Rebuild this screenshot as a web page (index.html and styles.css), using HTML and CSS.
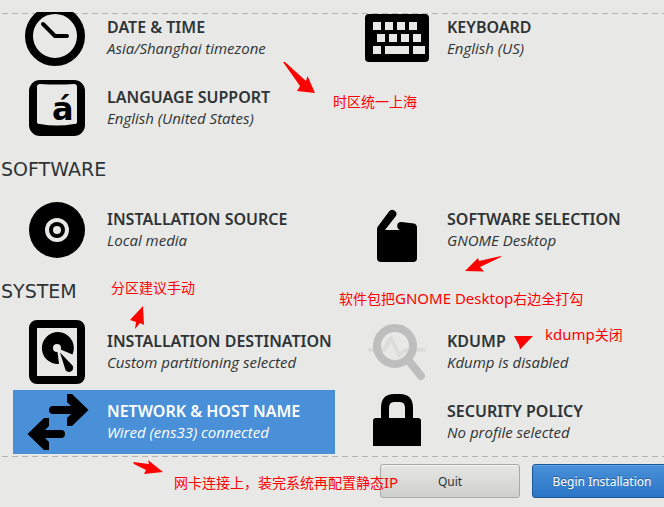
FILE: index.html
```html
<!DOCTYPE html>
<html lang="en">
<head>
<meta charset="utf-8">
<title>Installation Summary</title>
<link rel="stylesheet" href="styles.css">
</head>
<body>
<main class="summary">
  <div class="hub">
    <div class="grid">
      <a class="spoke" href="#">
        <svg class="icon" viewBox="0 0 64 64" aria-hidden="true">
          <circle cx="30" cy="30" r="26" fill="none" stroke="#000" stroke-width="8"/>
          <path d="M18 18L30 30H42" fill="none" stroke="#000" stroke-width="4" stroke-linecap="round" stroke-linejoin="round"/>
        </svg>
        <span class="label"><span class="name">DATE &amp; TIME</span><span class="status">Asia/Shanghai timezone</span></span>
      </a>
      <a class="spoke" href="#">
        <svg class="icon" viewBox="0 0 64 64" aria-hidden="true">
          <rect y="8" width="64" height="48" rx="4"/>
          <path class="cut" d="M8 16h8v8H8zM20 16h8v8h-8zM32 16h8v8h-8zM44 16h8v8h-8zM12 28h8v8h-8zM24 28h8v8h-8zM36 28h8v8h-8zM48 28h8v8h-8zM8 40h8v8H8zM20 40h24v8H20zM48 40h12v8H48z"/>
        </svg>
        <span class="label"><span class="name">KEYBOARD</span><span class="status">English (US)</span></span>
      </a>
      <a class="spoke" href="#">
        <svg class="icon" viewBox="0 0 64 64" aria-hidden="true">
          <rect x="4" y="4" width="56" height="56" rx="11"/>
          <path class="cut" d="M15 8Q32 9 49 8Q52 8 52 11V46Q52 48 49 48Q32 51 15 48Q12 48 12 46V11Q12 8 15 8Z"/>
          <text class="glyph" x="27" y="44">á</text>
        </svg>
        <span class="label"><span class="name">LANGUAGE SUPPORT</span><span class="status">English (United States)</span></span>
      </a>
    </div>

    <h2 class="section">SOFTWARE</h2>
    <div class="grid">
      <a class="spoke" href="#">
        <svg class="icon" viewBox="0 0 64 64" aria-hidden="true">
          <circle cx="32" cy="32" r="28"/>
          <circle class="cut" cx="32" cy="32" r="12"/>
          <circle cx="32" cy="32" r="8"/>
          <circle class="cut" cx="32" cy="32" r="4"/>
        </svg>
        <span class="label"><span class="name">INSTALLATION SOURCE</span><span class="status">Local media</span></span>
      </a>
      <a class="spoke" href="#">
        <svg class="icon" viewBox="0 0 64 64" aria-hidden="true">
          <path d="M12 32H52V60a4 4 0 0 1-4 4H16a4 4 0 0 1-4-4Z"/>
          <path d="M12 34V31Q12 29 14 27L24 13.500A4 4 0 0 1 30.500 18.500L20 32V34Z"/>
          <path d="M36 32a4 4 0 0 1 .5-8L49 25.500Q52 26 52 30V34H40V32Z"/>
        </svg>
        <span class="label"><span class="name">SOFTWARE SELECTION</span><span class="status">GNOME Desktop</span></span>
      </a>
    </div>

    <h2 class="section">SYSTEM</h2>
    <div class="grid">
      <a class="spoke" href="#">
        <svg class="icon" viewBox="0 0 64 64" aria-hidden="true">
          <rect x="8" y="4" width="48" height="56" rx="4" fill="none" stroke="#000" stroke-width="8"/>
          <path class="cut" d="M12 8H52V56H12Z"/>
          <path d="M32 28L47.500 34.500A16 16 0 1 0 34 44Z"/>
          <circle class="cut" cx="32" cy="28" r="4"/>
          <path d="M35 32.500L47.500 45.500A4 4 0 0 1 40.500 50Z"/>
        </svg>
        <span class="label"><span class="name">INSTALLATION DESTINATION</span><span class="status">Custom partitioning selected</span></span>
      </a>
      <a class="spoke" href="#">
        <svg class="icon" viewBox="0 0 64 64" fill="none" stroke-linecap="round" stroke-linejoin="round" aria-hidden="true">
          <path d="M5 30H19L26 18L34 35L41 30H59" stroke="#dcdcdb" stroke-width="4"/>
          <circle cx="30" cy="26" r="18" stroke="#bebebe" stroke-width="8"/>
          <path d="M44 41L56 56" stroke="#bebebe" stroke-width="8"/>
        </svg>
        <span class="label"><span class="name">KDUMP</span><span class="status">Kdump is disabled</span></span>
      </a>
      <a class="spoke selected" href="#">
        <svg class="icon" viewBox="0 0 64 64" aria-hidden="true">
          <path d="M42 4H47L63.500 20L47 36H42V28L46 24H28a4 4 0 0 1 0-8H46L42 12Z"/>
          <path d="M24 28H19L2.500 44L19 60H24V52L20 48H36a4 4 0 0 0 0-8H20L24 36Z"/>
        </svg>
        <span class="label"><span class="name">NETWORK &amp; HOST NAME</span><span class="status">Wired (ens33) connected</span></span>
      </a>
      <a class="spoke" href="#">
        <svg class="icon" viewBox="0 0 64 64" aria-hidden="true">
          <path d="M20 32V18Q20 8 29 8H35Q44 8 44 18V32" fill="none" stroke="#000" stroke-width="8"/>
          <path d="M8 56V31a3 3 0 0 1 3-3H53a3 3 0 0 1 3 3V56Z"/>
        </svg>
        <span class="label"><span class="name">SECURITY POLICY</span><span class="status">No profile selected</span></span>
      </a>
    </div>
  </div>
  <footer class="actions">
    <button class="button" type="button">Quit</button>
    <button class="button primary" type="button">Begin Installation</button>
  </footer>
</main>

<svg class="arrows" viewBox="0 0 664 507" aria-hidden="true">
  <path d="M283 62H285L306 81L307.500 76L315 93L297 91L300 86Z"/>
  <path d="M501 256V257L480 267L484 271.500L465 271L478 258L479 261Z"/>
  <path d="M143 306L144 325L140 323L135 329L136 322L130 320Z"/>
  <path d="M133 462L149 464L148 460L163 472L144 474L146 470L134 464Z"/>
  <path d="M514 336H533L520 349.500L519 345Z"/>
</svg>
<p class="note note-timezone">时区统一上海</p>
<p class="note note-partition">分区建议手动</p>
<p class="note note-packages">软件包把<span class="latin">GNOME Desktop</span>右边全打勾</p>
<p class="note note-kdump"><span class="latin">kdump</span>关闭</p>
<p class="note note-network">网卡连接上，装完系统再配置静态<span class="latin">IP</span></p>
</body>
</html>
```

FILE: styles.css
```css
* {
  box-sizing: border-box;
}

body {
  position: relative;
  margin: 0;
  overflow: hidden;
  background: #e8e8e6;
  color: #2e3436;
  font-family: "Noto Sans", "Open Sans", sans-serif;
}

.summary {
  padding-top: 12px;
}

/* Scrolled area, with a dashed edge where content continues */
.hub {
  position: relative;
  overflow: hidden;
  padding-bottom: 3px;
}

.hub::before,
.hub::after {
  content: "";
  position: absolute;
  left: 0;
  right: 0;
  height: 1px;
  background: repeating-linear-gradient(90deg, transparent 0 2px, #b4b4b2 2px 8px, transparent 8px 10px);
}

.hub::before {
  top: 1px;
}

.hub::after {
  bottom: 0;
}

.grid {
  display: grid;
  grid-template-columns: 1fr 1fr;
  gap: 6px 18px;
  margin-left: 13px;
  margin-right: -11px;
}

.grid:first-child {
  margin-top: -6px;
}

.spoke {
  position: relative;
  display: flex;
  gap: 18px;
  height: 64px;
  padding-left: 12px;
  color: inherit;
  text-decoration: none;
}

.icon {
  flex: none;
  width: 64px;
  height: 64px;
}

.cut {
  fill: #e8e8e6;
}

.glyph {
  font: bold 32px "DejaVu Sans", sans-serif;
}

.label {
  display: flex;
  flex-direction: column;
  padding-top: 11px;
  white-space: nowrap;
}

.name {
  font-size: 16px;
  line-height: 21px;
  font-weight: 600;
}

.status {
  font-family: "Open Sans", "Noto Sans", sans-serif;
  font-size: 15px;
  line-height: 21px;
  font-style: italic;
}

.selected {
  background: #4a90d9;
  color: #fff;
}

.section {
  margin: 0;
  padding: 14px 1px;
  font-family: "DejaVu Sans", sans-serif;
  font-size: 19px;
  line-height: 30px;
  font-weight: 400;
}

.actions {
  display: flex;
  justify-content: flex-end;
  gap: 12px;
  margin-right: -8px;
  padding-top: 7px;
}

.button {
  width: 140px;
  height: 34px;
  padding: 0;
  border: 1px solid #a8a8a6;
  border-radius: 3px;
  background: linear-gradient(#e6e6e5, #cfcfcd);
  box-shadow: inset 0 1px #f6f6f5;
  color: #2e3436;
  font: 12px "Noto Sans", "Open Sans", sans-serif;
}

.primary {
  border-color: #1c5795;
  background: linear-gradient(#4a90d9, #2a76c6);
  box-shadow: inset 0 1px #66a4e2;
  color: #fff;
  text-shadow: 0 -1px rgba(0, 0, 0, 0.35);
}

/* Annotations pinned over the screen */
.arrows {
  position: absolute;
  left: 0;
  top: 0;
  width: 664px;
  height: 507px;
  fill: #f00;
  pointer-events: none;
}

.note {
  position: absolute;
  margin: 0;
  color: #f00;
  font: 14px/20px "Noto Sans", "Noto Sans CJK SC", sans-serif;
  white-space: nowrap;
}

.latin {
  font-size: 15px;
}

.note-timezone {
  left: 333px;
  top: 92px;
}

.note-partition {
  left: 111px;
  top: 278px;
}

.note-packages {
  left: 339px;
  top: 288px;
}

.note-kdump {
  left: 545px;
  top: 324px;
}

.note-network {
  left: 174px;
  top: 472px;
}
```
